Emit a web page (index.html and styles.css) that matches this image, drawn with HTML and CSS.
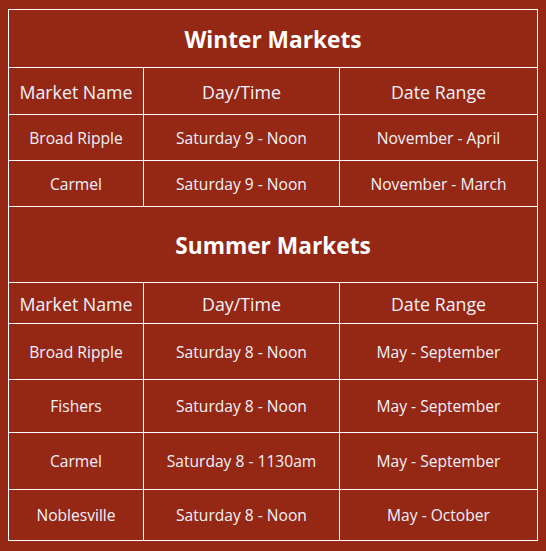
FILE: index.html
```html
<!DOCTYPE html>
<html>
<head>
<meta charset="utf-8">
<link rel="stylesheet" href="styles.css">
</head>
<body>
<table class="markets">
  <colgroup>
    <col class="c1"><col class="c2"><col class="c3">
  </colgroup>
  <tr class="title t1"><th colspan="3">Winter Markets</th></tr>
  <tr class="head h1"><td>Market Name</td><td>Day/Time</td><td>Date Range</td></tr>
  <tr class="row r46"><td>Broad Ripple</td><td>Saturday 9 - Noon</td><td>November - April</td></tr>
  <tr class="row r46"><td>Carmel</td><td>Saturday 9 - Noon</td><td>November - March</td></tr>
  <tr class="title t2"><th colspan="3">Summer Markets</th></tr>
  <tr class="head h2"><td>Market Name</td><td>Day/Time</td><td>Date Range</td></tr>
  <tr class="row r56"><td>Broad Ripple</td><td>Saturday 8 - Noon</td><td>May - September</td></tr>
  <tr class="row r53"><td>Fishers</td><td>Saturday 8 - Noon</td><td>May - September</td></tr>
  <tr class="row r57"><td>Carmel</td><td>Saturday 8 - 1130am</td><td>May - September</td></tr>
  <tr class="row r51"><td>Noblesville</td><td>Saturday 8 - Noon</td><td>May - October</td></tr>
</table>
</body>
</html>
```
FILE: styles.css
```css
html, body {
  background: #952715;
}
body {
  margin: 9px 8px 8px 8px;
  font-family: "Open Sans", "Liberation Sans", sans-serif;
  color: #f4f2fa;
}
.markets {
  border-collapse: collapse;
  width: 530px;
  table-layout: fixed;
}
.c1 { width: 135px; }
.c2 { width: 196px; }
.c3 { width: 198px; }
.markets th, .markets td {
  border: 1px solid #ffffff;
  text-align: center;
  vertical-align: middle;
  padding: 0;
  white-space: nowrap;
}
.title th {
  font-size: 22.7px;
  font-weight: 700;
  color: #ffffff;
}
.t1 th { height: 55px; padding-top: 2px; }
.t2 th { height: 73px; padding-top: 2px; }
.head td { font-size: 17.8px; }
.h1 td { height: 44px; padding-top: 2px; }
.h2 td { height: 38px; padding-top: 2px; }
.row td { font-size: 15.6px; }
.r46 td { height: 45px; }
.r56 td { height: 55px; }
.r53 td { height: 52px; }
.r57 td { height: 56px; }
.r51 td { height: 50px; }
```
